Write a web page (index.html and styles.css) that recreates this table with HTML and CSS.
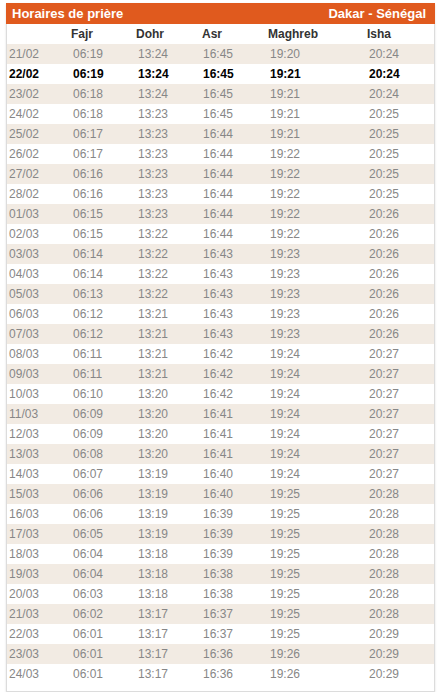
FILE: index.html
```html
<!DOCTYPE html>
<html lang="fr">
<head>
<meta charset="utf-8">
<title>Horaires de prière</title>
<link rel="stylesheet" href="styles.css">
</head>
<body>
<div class="box">
  <div class="box-head">
    <span class="box-title">Horaires de prière</span>
    <span class="box-place">Dakar - Sénégal</span>
  </div>
  <table class="times">
    <colgroup>
      <col class="c-date"><col class="c-fajr"><col class="c-dohr"><col class="c-asr"><col class="c-maghreb"><col class="c-isha">
    </colgroup>
    <thead>
      <tr><th></th><th>Fajr</th><th>Dohr</th><th class="th-asr">Asr</th><th>Maghreb</th><th>Isha</th></tr>
    </thead>
    <tbody>
      <tr><td>21/02</td><td>06:19</td><td>13:24</td><td>16:45</td><td>19:20</td><td>20:24</td></tr>
      <tr class="today"><td>22/02</td><td>06:19</td><td>13:24</td><td>16:45</td><td>19:21</td><td>20:24</td></tr>
      <tr><td>23/02</td><td>06:18</td><td>13:24</td><td>16:45</td><td>19:21</td><td>20:24</td></tr>
      <tr><td>24/02</td><td>06:18</td><td>13:23</td><td>16:45</td><td>19:21</td><td>20:25</td></tr>
      <tr><td>25/02</td><td>06:17</td><td>13:23</td><td>16:44</td><td>19:21</td><td>20:25</td></tr>
      <tr><td>26/02</td><td>06:17</td><td>13:23</td><td>16:44</td><td>19:22</td><td>20:25</td></tr>
      <tr><td>27/02</td><td>06:16</td><td>13:23</td><td>16:44</td><td>19:22</td><td>20:25</td></tr>
      <tr><td>28/02</td><td>06:16</td><td>13:23</td><td>16:44</td><td>19:22</td><td>20:25</td></tr>
      <tr><td>01/03</td><td>06:15</td><td>13:23</td><td>16:44</td><td>19:22</td><td>20:26</td></tr>
      <tr><td>02/03</td><td>06:15</td><td>13:22</td><td>16:44</td><td>19:22</td><td>20:26</td></tr>
      <tr><td>03/03</td><td>06:14</td><td>13:22</td><td>16:43</td><td>19:23</td><td>20:26</td></tr>
      <tr><td>04/03</td><td>06:14</td><td>13:22</td><td>16:43</td><td>19:23</td><td>20:26</td></tr>
      <tr><td>05/03</td><td>06:13</td><td>13:22</td><td>16:43</td><td>19:23</td><td>20:26</td></tr>
      <tr><td>06/03</td><td>06:12</td><td>13:21</td><td>16:43</td><td>19:23</td><td>20:26</td></tr>
      <tr><td>07/03</td><td>06:12</td><td>13:21</td><td>16:43</td><td>19:23</td><td>20:26</td></tr>
      <tr><td>08/03</td><td>06:11</td><td>13:21</td><td>16:42</td><td>19:24</td><td>20:27</td></tr>
      <tr><td>09/03</td><td>06:11</td><td>13:21</td><td>16:42</td><td>19:24</td><td>20:27</td></tr>
      <tr><td>10/03</td><td>06:10</td><td>13:20</td><td>16:42</td><td>19:24</td><td>20:27</td></tr>
      <tr><td>11/03</td><td>06:09</td><td>13:20</td><td>16:41</td><td>19:24</td><td>20:27</td></tr>
      <tr><td>12/03</td><td>06:09</td><td>13:20</td><td>16:41</td><td>19:24</td><td>20:27</td></tr>
      <tr><td>13/03</td><td>06:08</td><td>13:20</td><td>16:41</td><td>19:24</td><td>20:27</td></tr>
      <tr><td>14/03</td><td>06:07</td><td>13:19</td><td>16:40</td><td>19:24</td><td>20:27</td></tr>
      <tr><td>15/03</td><td>06:06</td><td>13:19</td><td>16:40</td><td>19:25</td><td>20:28</td></tr>
      <tr><td>16/03</td><td>06:06</td><td>13:19</td><td>16:39</td><td>19:25</td><td>20:28</td></tr>
      <tr><td>17/03</td><td>06:05</td><td>13:19</td><td>16:39</td><td>19:25</td><td>20:28</td></tr>
      <tr><td>18/03</td><td>06:04</td><td>13:18</td><td>16:39</td><td>19:25</td><td>20:28</td></tr>
      <tr><td>19/03</td><td>06:04</td><td>13:18</td><td>16:38</td><td>19:25</td><td>20:28</td></tr>
      <tr><td>20/03</td><td>06:03</td><td>13:18</td><td>16:38</td><td>19:25</td><td>20:28</td></tr>
      <tr><td>21/03</td><td>06:02</td><td>13:17</td><td>16:37</td><td>19:25</td><td>20:28</td></tr>
      <tr><td>22/03</td><td>06:01</td><td>13:17</td><td>16:37</td><td>19:25</td><td>20:29</td></tr>
      <tr><td>23/03</td><td>06:01</td><td>13:17</td><td>16:36</td><td>19:26</td><td>20:29</td></tr>
      <tr><td>24/03</td><td>06:01</td><td>13:17</td><td>16:36</td><td>19:26</td><td>20:29</td></tr>
    </tbody>
  </table>
</div>
</body>
</html>
```
FILE: styles.css
```css
html, body {
  margin: 0;
  padding: 0;
  background: #fff;
}

body {
  padding: 3px 4px 0 6px;
  font-family: "Liberation Sans", Arial, sans-serif;
  font-size: 12px;
}

.box {
  width: 427px;
  border: 1px solid #dcdcdc;
  border-top: 0;
  box-shadow: 0 1px 2px rgba(0, 0, 0, 0.12);
  padding-bottom: 7px;
  background: #fff;
}

.box-head {
  display: flex;
  justify-content: space-between;
  align-items: center;
  height: 21px;
  margin: 0 -1px;
  padding: 0 9px 0 6px;
  background: #e05a1e;
  color: #fff;
  font-size: 13px;
  font-weight: bold;
}

.times {
  width: 427px;
  border-collapse: collapse;
  table-layout: fixed;
}

.c-date { width: 64px; }
.c-fajr { width: 65px; }
.c-dohr { width: 65px; }
.c-asr { width: 67px; }
.c-maghreb { width: 99px; }
.c-isha { width: 67px; }

.times th,
.times td {
  height: 20px;
  padding: 0 0 0 2px;
  text-align: left;
  vertical-align: middle;
  white-space: nowrap;
  line-height: 20px;
}

.times th {
  padding-left: 0;
  color: #333;
  font-weight: bold;
}

.times th.th-asr {
  padding-left: 1px;
}

.times td {
  color: #878787;
}

.times tbody tr:nth-child(odd) {
  background: #f2ebe3;
}

.times tbody tr.today {
  background: #fff;
}

.times tbody tr.today td {
  color: #000;
  font-weight: bold;
}
```
